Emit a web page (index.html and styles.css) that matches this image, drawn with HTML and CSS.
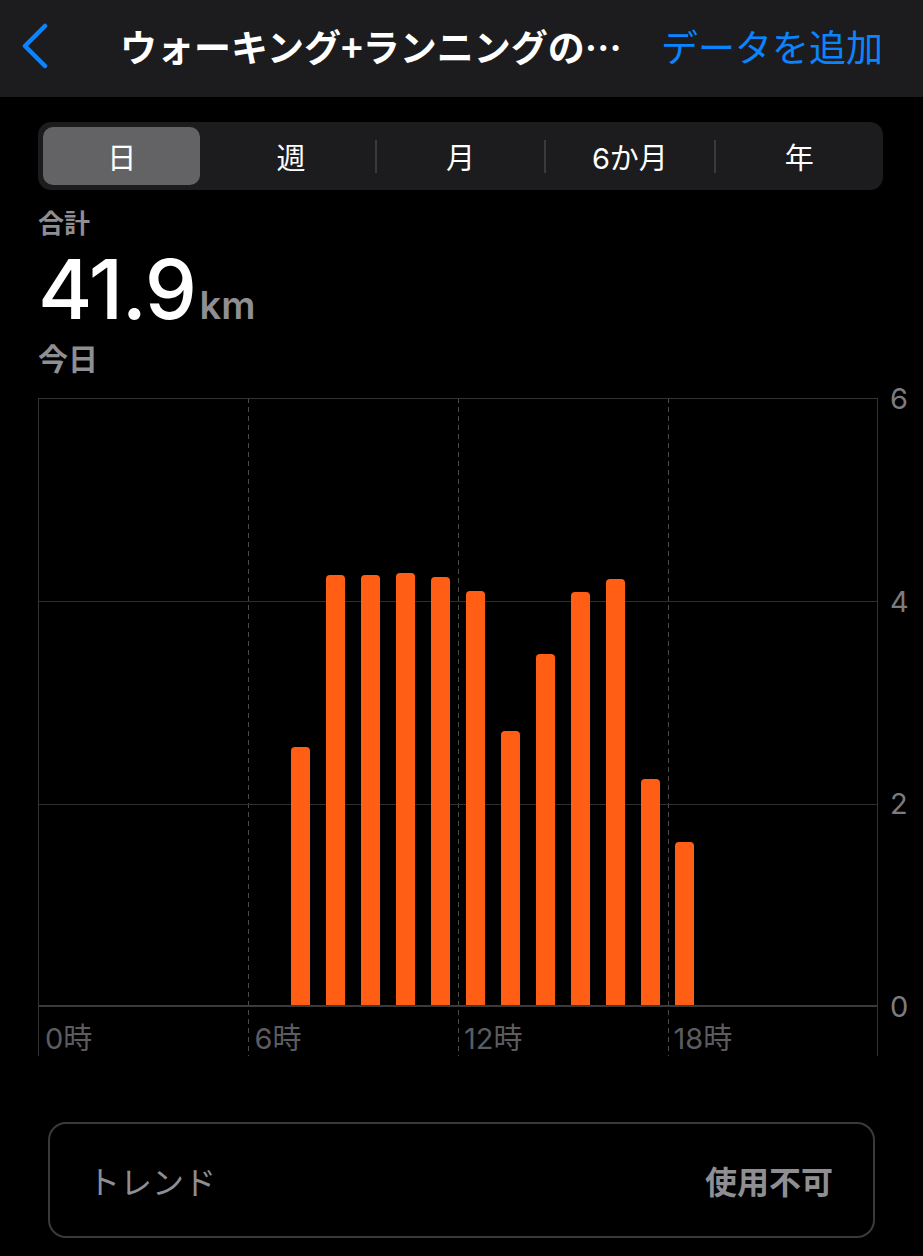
FILE: index.html
```html
<!DOCTYPE html>
<html lang="ja">
<head>
    <meta charset="UTF-8">
    <meta name="viewport" content="width=device-width, initial-scale=1.0">
    <title>ウォーキング+ランニングの距離</title>
    <link rel="stylesheet" href="styles.css">
</head>
<body>
    <header class="nav">
        <button class="back" aria-label="戻る">
            <svg width="30" height="46" viewBox="0 0 30 46"><polyline points="25,3 5,23 25,43" fill="none" stroke="#0a84ff" stroke-width="4.5" stroke-linecap="round" stroke-linejoin="round"/></svg>
        </button>
        <h1 class="title">ウォーキング+ランニングの…</h1>
        <a class="add" href="#">データを追加</a>
    </header>

    <div class="segments">
        <button class="seg active">日</button>
        <button class="seg">週</button>
        <button class="seg sep">月</button>
        <button class="seg sep">6か月</button>
        <button class="seg sep">年</button>
    </div>

    <section class="summary">
        <div class="label">合計</div>
        <div class="value">41.9<span class="unit">km</span></div>
        <div class="label date">今日</div>
    </section>

    <section class="chart-row">
        <div class="chart">
            <div class="plot">
                <div></div><div></div><div></div><div></div><div></div><div></div><div></div>
                <div class="bar" style="height: 258px"></div>
                <div class="bar" style="height: 430px"></div>
                <div class="bar" style="height: 430px"></div>
                <div class="bar" style="height: 432px"></div>
                <div class="bar" style="height: 428px"></div>
                <div class="bar" style="height: 414px"></div>
                <div class="bar" style="height: 274px"></div>
                <div class="bar" style="height: 351px"></div>
                <div class="bar" style="height: 413px"></div>
                <div class="bar" style="height: 426px"></div>
                <div class="bar" style="height: 226px"></div>
                <div class="bar" style="height: 163px"></div>
            </div>
            <div class="x-axis">
                <span>0時</span>
                <span>6時</span>
                <span>12時</span>
                <span>18時</span>
            </div>
        </div>
        <div class="y-axis">
            <span>6</span>
            <span>4</span>
            <span>2</span>
            <span>0</span>
        </div>
    </section>

    <div class="trend">
        <span class="trend-name">トレンド</span>
        <span class="trend-value">使用不可</span>
    </div>
</body>
</html>
```

FILE: styles.css
```css
/* Base styling */
body {
    margin: 0;
    width: 923px;
    height: 1256px;
    overflow: hidden;
    background-color: #000;
    color: #fff;
    font-family: Inter, "Noto Sans CJK JP", sans-serif;
}

/* Navigation bar */
.nav {
    display: flex;
    align-items: center;
    height: 97px;
    padding: 0 40px 6px 20px;
    background-color: #1c1c1e;
    box-sizing: border-box;
}
.back {
    display: flex;
    padding: 0;
    margin-right: 70px;
    border: none;
    background: none;
}
.title {
    flex: 1;
    margin: 0;
    font-family: "Noto Sans CJK JP", sans-serif;
    font-size: 37px;
    font-weight: 700;
    white-space: nowrap;
}
.add {
    margin-left: 24px;
    color: #0a84ff;
    font-size: 37px;
    text-decoration: none;
    white-space: nowrap;
}

/* Segmented control */
.segments {
    display: grid;
    grid-template-columns: repeat(5, 1fr);
    column-gap: 12px;
    margin: 25px 40px 0 38px;
    padding: 5px 5px;
    height: 68px;
    box-sizing: border-box;
    background-color: #1c1c1e;
    border-radius: 13px;
}
.seg {
    position: relative;
    border: none;
    border-radius: 10px;
    background: none;
    color: #fff;
    font-family: inherit;
    font-size: 29px;
}
.seg.active {
    background-color: #636366;
}
.seg.sep::before {
    content: "";
    position: absolute;
    left: -7px;
    top: 13px;
    bottom: 12px;
    width: 2px;
    background-color: #3a3a3c;
}

/* Summary */
.summary {
    padding: 19px 38px 0 38px;
}
.label {
    color: #8e8e93;
    font-size: 26px;
    font-weight: 600;
    line-height: 30px;
}
.value {
    font-size: 83px;
    font-weight: 500;
    line-height: 101px;
    letter-spacing: -1.5px;
}
.unit {
    margin-left: 4px;
    color: #8e8e93;
    font-size: 38px;
    font-weight: 600;
    line-height: 1;
    letter-spacing: 0;
}
.date {
    margin-top: 2px;
    font-size: 30px;
    line-height: 34px;
}

/* Chart */
.chart-row {
    display: flex;
    margin-top: 22px;
    padding-left: 38px;
}
.chart {
    width: 840px;
    border-left: 1px solid #333;
    border-right: 1px solid #333;
    box-sizing: border-box;
    background:
        repeating-linear-gradient(#4a4a4a 0 5px, transparent 5px 9px) 209px 0 / 1px 100% no-repeat,
        repeating-linear-gradient(#4a4a4a 0 5px, transparent 5px 9px) 419px 0 / 1px 100% no-repeat,
        repeating-linear-gradient(#4a4a4a 0 5px, transparent 5px 9px) 629px 0 / 1px 100% no-repeat;
}
.plot {
    display: grid;
    grid-template-columns: repeat(24, 1fr);
    align-items: end;
    height: 609px;
    border-top: 1px solid #333;
    border-bottom: 2px solid #3a3a3c;
    box-sizing: border-box;
    background:
        linear-gradient(#2e2e2e, #2e2e2e) 0 202px / 100% 1px no-repeat,
        linear-gradient(#2e2e2e, #2e2e2e) 0 405px / 100% 1px no-repeat;
}
.bar {
    justify-self: center;
    width: 19px;
    background-color: #ff5e14;
    border-radius: 4px 4px 0 0;
}
.x-axis {
    display: grid;
    grid-template-columns: repeat(4, 1fr);
    height: 49px;
    color: #5c5c60;
    font-size: 29px;
    line-height: 64px;
}
.x-axis span {
    padding-left: 6px;
}
.y-axis {
    display: flex;
    flex-direction: column;
    justify-content: space-between;
    height: 640px;
    margin-top: -15px;
    padding-left: 12px;
    color: #7c7c80;
    font-size: 29px;
    line-height: 32px;
}

/* Trend card */
.trend {
    display: flex;
    justify-content: space-between;
    align-items: center;
    height: 116px;
    margin: 66px 48px 0 48px;
    padding: 0 40px 0 38px;
    box-sizing: border-box;
    border: 2px solid #3a3a3c;
    border-radius: 18px;
    color: #8e8e93;
    font-size: 32px;
}
.trend-value {
    font-weight: 600;
}
```
